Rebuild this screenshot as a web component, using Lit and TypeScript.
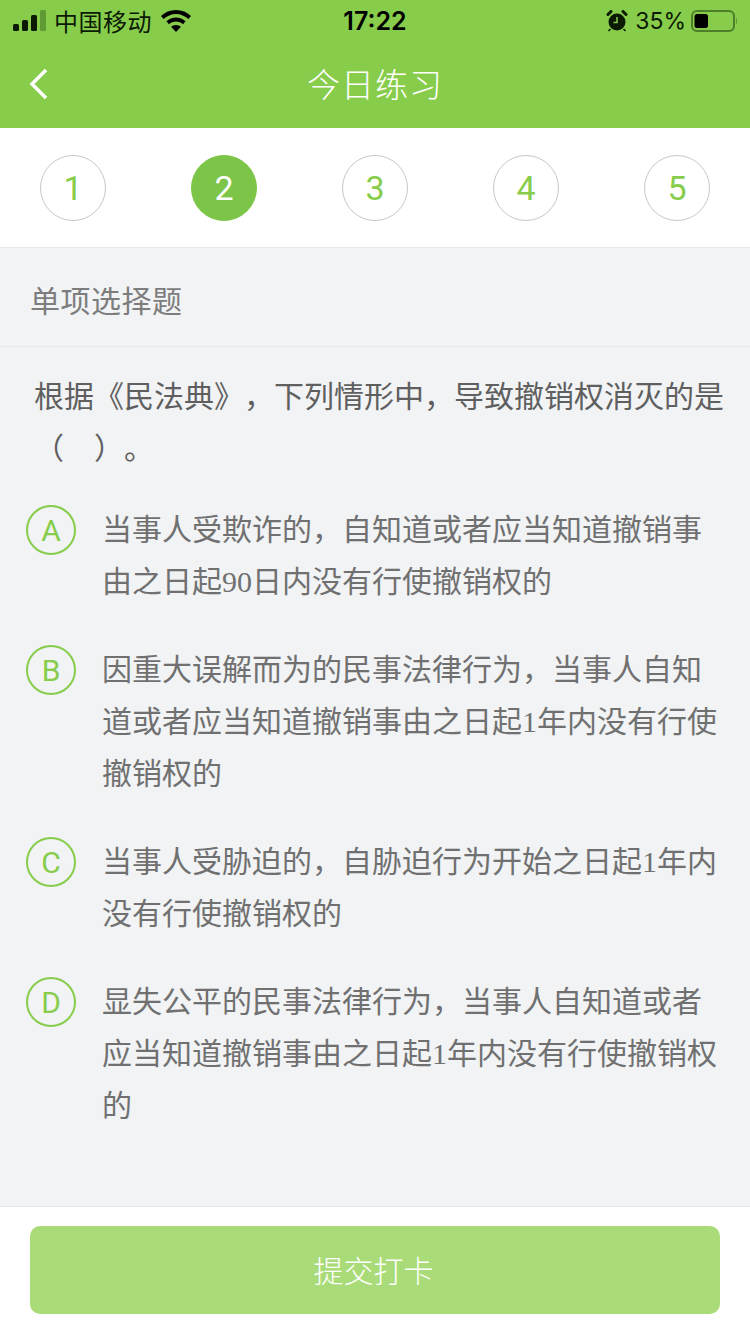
import { LitElement, html, css } from "lit";
import { customElement } from "lit/decorators.js";

const options = [
  { k: "A", t: "当事人受欺诈的，自知道或者应当知道撤销事由之日起90日内没有行使撤销权的" },
  { k: "B", t: "因重大误解而为的民事法律行为，当事人自知道或者应当知道撤销事由之日起1年内没有行使撤销权的" },
  { k: "C", t: "当事人受胁迫的，自胁迫行为开始之日起1年内没有行使撤销权的" },
  { k: "D", t: "显失公平的民事法律行为，当事人自知道或者应当知道撤销事由之日起1年内没有行使撤销权的" },
];

@customElement("app-root")
export class AppRoot extends LitElement {
  static styles = css`
    :host {
      display: block;
      width: 750px;
      height: 1334px;
      background: #f1f3f5;
      font-family: "Noto Sans CJK SC", sans-serif;
      overflow: hidden;
      text-spacing-trim: space-all;
    }
    .page { height: 1334px; display: flex; flex-direction: column; }
    .top { background: #87cd4b; height: 128px; flex: none; display: flex; flex-direction: column; }
    .status {
      height: 40px; display: grid; grid-template-columns: 1fr auto 1fr; align-items: center;
      color: #0c1a04; padding: 0 13px; box-sizing: border-box; margin-top: 1px;
    }
    .s-left { display: flex; align-items: center; }
    .s-left svg.sig { margin-right: 7px; }
    .carrier { font-size: 24px; letter-spacing: 0.5px; line-height: 40px; margin-right: 9px; }
    .time { font-family: Inter, sans-serif; font-size: 25px; font-weight: 600; color: #000; }
    .s-right { display: flex; justify-content: flex-end; align-items: center; }
    .pct { font-family: Inter, sans-serif; font-size: 23px; margin: 0 5px 0 7px; }
    .nav {
      height: 87px; display: flex; align-items: center; justify-content: center; position: relative;
      padding-bottom: 4px; box-sizing: border-box;
    }
    .back { position: absolute; left: 29px; top: 27px; }
    .title { color: #fff; font-size: 33px; letter-spacing: 1px; font-weight: 300; }
    .steps {
      height: 120px; flex: none; background: #fff; border-bottom: 1px solid #e6e8ea;
      display: flex; justify-content: space-between; align-items: flex-start;
      padding: 27px 40px 0; box-sizing: border-box;
    }
    .step {
      width: 66px; height: 66px; border-radius: 50%; border: 1px solid #c8c8c8; box-sizing: border-box;
      display: flex; align-items: center; justify-content: center;
      color: #87cd4b; font-family: Roboto, sans-serif; font-size: 34px; font-weight: 400;
    }
    .step.on { background: #7cc548; border-color: #7cc548; color: #fff; }
    .label {
      height: 99px; flex: none; border-bottom: 1px solid #e6e8ea; padding: 3px 0 0 30px;
      display: flex; align-items: center; font-size: 30px; letter-spacing: 0.5px; color: #7d7d7d; font-weight: 400;
      box-sizing: border-box;
    }
    .q {
      font-size: 30px; line-height: 52px; color: #5f5f5f; padding: 21px 20px 0 34px; font-weight: 400;
    }
    .opts { flex: 1; padding: 32px 30px 0 26px; display: flex; flex-direction: column; gap: 36px; }
    .opt { display: flex; align-items: flex-start; gap: 26px; }
    .badge {
      flex: none; width: 50px; height: 50px; margin-top: 1px; border-radius: 50%; border: 2px solid #87cd4b;
      box-sizing: border-box; display: flex; align-items: center; justify-content: center;
      color: #87cd4b; font-family: Roboto, sans-serif; font-size: 30px; font-weight: 400;
    }
    .o-text {
      font-family: "Liberation Serif", "Noto Sans CJK SC", serif;
      font-size: 30px; line-height: 52px; color: #707070; flex: 1; font-weight: 400;
    }
    .foot {
      height: 128px; flex: none; background: #fff; border-top: 1px solid #e6e8ea; box-sizing: border-box;
      padding: 19px 30px 0;
    }
    .btn {
      height: 88px; background: #a9dc78; border-radius: 10px; color: #fff; font-size: 30px; font-weight: 300;
      display: flex; align-items: center; justify-content: center; padding: 0 3px 3px 0; box-sizing: border-box;
    }
  `;

  render() {
    return html`<div class="page">
      <div class="top">
        <div class="status">
          <div class="s-left">
            <svg class="sig" width="34" height="22" viewBox="0 0 34 22">
              <rect x="0" y="14" width="6" height="7" rx="1.5" fill="#0c1a04"/>
              <rect x="9" y="10" width="6" height="11" rx="1.5" fill="#0c1a04"/>
              <rect x="18" y="5" width="6" height="16" rx="1.5" fill="#0c1a04"/>
              <rect x="27" y="0" width="6" height="21" rx="1.5" fill="#5f9a35"/>
            </svg>
            <span class="carrier">中国移动</span>
            <svg width="30" height="22" viewBox="0 0 30 22" fill="#000">
              <path d="M15 0C9 0 4 2.3 0 6l2.6 3C6 6 10.300 4 15 4s9 2 12.400 5L30 6C26 2.300 21 0 15 0z"/>
              <path d="M15 7.500c-3.700 0-7 1.400-9.600 3.700L8 14.200c1.900-1.600 4.300-2.600 7-2.600s5.100 1 7 2.600l2.600-3C22 8.900 18.700 7.500 15 7.500z"/>
              <path d="M15 15c-1.900 0-3.600.7-4.900 1.800L15 22l4.900-5.200C18.600 15.700 16.900 15 15 15z"/>
            </svg>
          </div>
          <div class="time">17:22</div>
          <div class="s-right">
            <svg width="22" height="22" viewBox="0 0 22 22">
              <circle cx="11" cy="12" r="8.500" fill="#0c1a04"/>
              <path d="M2 4.500 5 1.500M20 4.500 17 1.500" stroke="#0c1a04" stroke-width="3" stroke-linecap="round"/>
              <path d="M4.500 19l-2 2M17.500 19l2 2" stroke="#0c1a04" stroke-width="1.500"/>
              <path d="M11 7v5.500H7.500" fill="none" stroke="#87cd4b" stroke-width="1.500"/>
            </svg>
            <span class="pct">35%</span>
            <svg width="46" height="22" viewBox="0 0 46 22">
              <rect x="1" y="1" width="42" height="20" rx="5" fill="none" stroke="#4c7f28" stroke-width="2"/>
              <rect x="3.500" y="4" width="13.500" height="14" rx="2.500" fill="#000"/>
              <path d="M45 7.500c1 .8 1 6.200 0 7z" fill="#4c7f28"/>
            </svg>
          </div>
        </div>
        <div class="nav">
          <svg class="back" width="20" height="32" viewBox="0 0 20 32">
            <path d="M17 2 3 16l14 14" fill="none" stroke="#fff" stroke-width="3.500"/>
          </svg>
          <span class="title">今日练习</span>
        </div>
      </div>
      <div class="steps">
        ${[1, 2, 3, 4, 5].map((n) => html`<div class="step ${n === 2 ? "on" : ""}">${n}</div>`)}
      </div>
      <div class="label">单项选择题</div>
      <div class="q">根据《民法典》，下列情形中，导致撤销权消灭的是（　）。</div>
      <div class="opts">
        ${options.map(
          (o) => html`<div class="opt">
            <div class="badge">${o.k}</div>
            <div class="o-text">${o.t}</div>
          </div>`
        )}
      </div>
      <div class="foot"><div class="btn">提交打卡</div></div>
    </div>`;
  }
}
